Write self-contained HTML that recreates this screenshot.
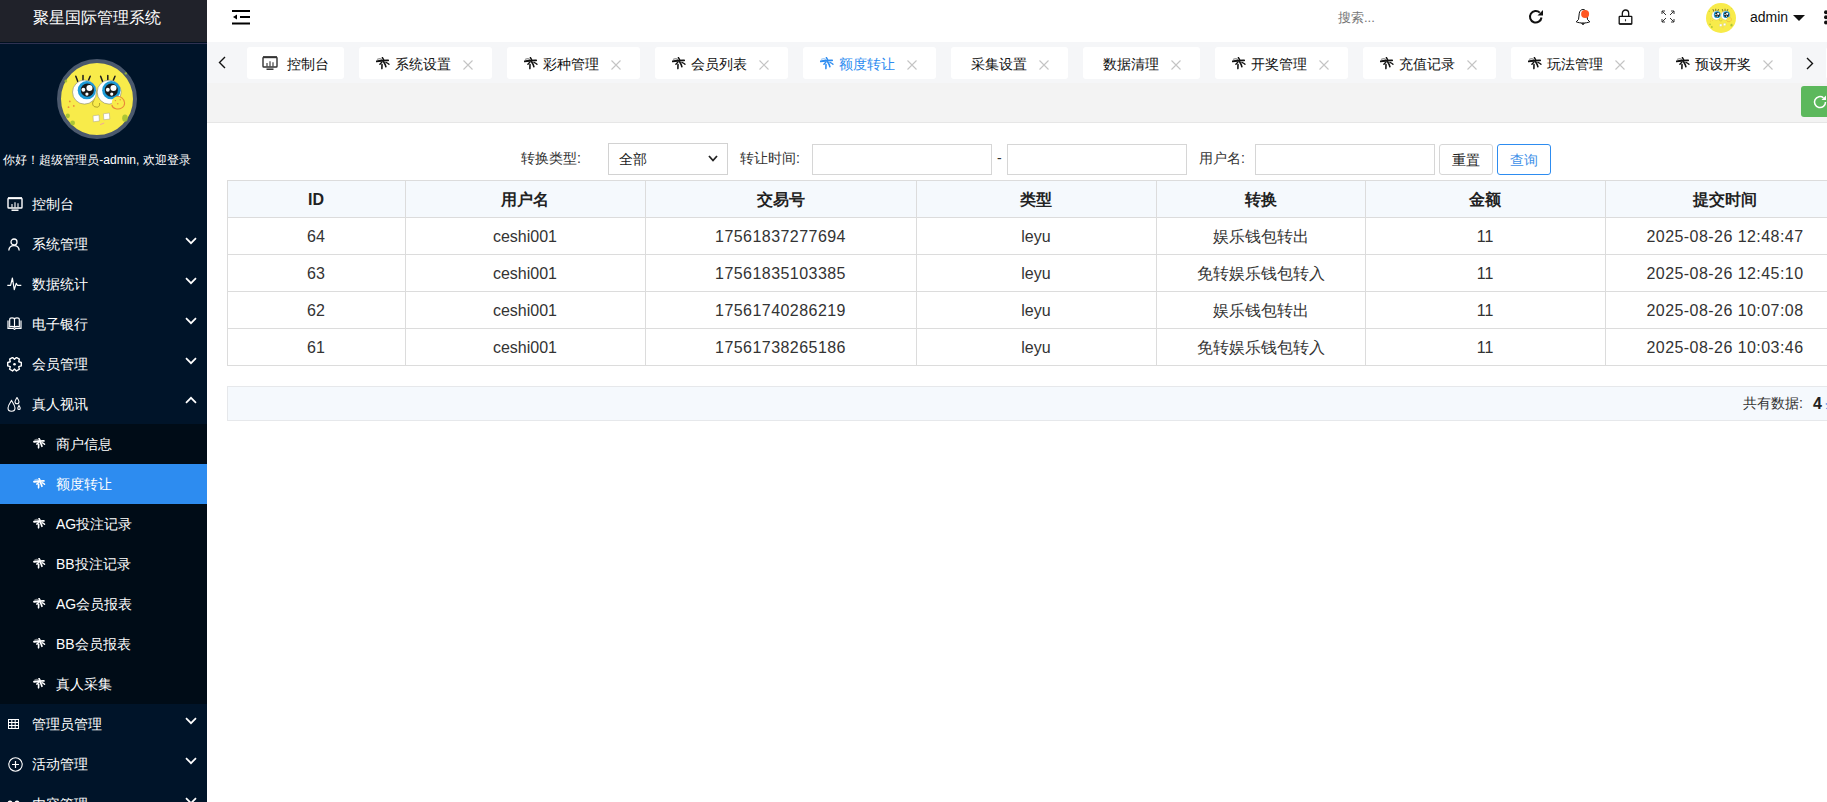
<!DOCTYPE html><html><head><meta charset="utf-8"><style>
*{margin:0;padding:0;box-sizing:border-box}
html,body{width:1827px;height:802px;overflow:hidden;background:#fff;font-family:"Liberation Sans",sans-serif;color:#333}
.a{position:absolute;white-space:nowrap}
svg{display:block}
</style></head><body>
<div class="a" style="left:0px;top:0px;width:207px;height:802px;background:#001429"></div>
<div class="a" style="left:0px;top:0px;width:207px;height:42px;background:#20222a"></div>
<div class="a" style="left:0px;top:42px;width:207px;height:1px;background:#00101f"></div>
<div class="a" style="left:0px;top:43px;width:207px;height:1px;background:#2e3252"></div>
<div class="a" style="left:0px;top:8px;width:194px;text-align:center;color:#fff;font-size:16px;line-height:20px">聚星国际管理系统</div>
<div class="a" style="left:57px;top:59px;"><svg width="80" height="80" viewBox="0 0 100 100"><circle cx="50" cy="50" r="47.5" fill="#f8eb4a" stroke="#4b596d" stroke-width="5"/>
<g fill="#9fbf32" opacity="0.85"><ellipse cx="13.5" cy="71" rx="2.6" ry="3"/><ellipse cx="19.5" cy="80" rx="3" ry="3"/><ellipse cx="85" cy="74" rx="3.5" ry="4.5"/><ellipse cx="11" cy="27.5" rx="1.8" ry="2"/><ellipse cx="86" cy="18" rx="1.5" ry="1.5"/></g>
<g fill="#ea8a3c"><circle cx="16" cy="53" r="1.1"/><circle cx="14.4" cy="60.2" r="1.1"/><circle cx="21" cy="58.6" r="1.1"/></g>
<g stroke="#1d1d1d" stroke-width="1.9" stroke-linecap="round"><path d="M26 28L23.5 21.5M32.5 27V20.5M39 27.5L41.5 21.5M57 28L54.5 21.5M63.5 27V20.5M70 27.5L72.5 21.5"/></g>
<circle cx="34.4" cy="41.4" r="15" fill="#fff" stroke="#8a8a6a" stroke-width="0.8"/>
<circle cx="65.2" cy="41.4" r="15" fill="#fff" stroke="#8a8a6a" stroke-width="0.8"/>
<circle cx="37.3" cy="39" r="11.4" fill="#1c9ad6"/><circle cx="67.9" cy="39" r="11.4" fill="#1c9ad6"/>
<circle cx="37.9" cy="38.9" r="8.2" fill="#1a1a1a"/><circle cx="67.9" cy="38.9" r="8.2" fill="#1a1a1a"/>
<circle cx="40.6" cy="36.2" r="3.8" fill="#fff"/><circle cx="33" cy="38.4" r="2.4" fill="#fff"/><circle cx="37.4" cy="43.9" r="2" fill="#fff"/>
<circle cx="70.6" cy="36.2" r="3.8" fill="#fff"/><circle cx="63.5" cy="38.4" r="2.4" fill="#fff"/><circle cx="68.4" cy="43.9" r="2" fill="#fff"/>
<path d="M47 51C43 54 44 60 49 60C52 61 54 58 53 55" fill="#f8eb4a" stroke="#9a8a20" stroke-width="1"/>
<circle cx="76.5" cy="54.5" r="8" fill="#f8eb4a"/><path d="M74 46.8C79 46 84.5 49.5 84.5 55C84.5 60.5 79 63.5 73.5 62.2C70.5 61.5 69 59.5 68.5 57.5" fill="none" stroke="#e8863a" stroke-width="1.3"/>
<path d="M45 71L52.5 70L53 77.5L45.5 78.5Z" fill="#fff" stroke="#b0a888" stroke-width="0.7"/><path d="M58 68.5L65.5 67.5L66 75L58.5 76Z" fill="#fff" stroke="#b0a888" stroke-width="0.7"/>
<path d="M54 82L59 80" stroke="#f0a0a0" stroke-width="1.2"/><g fill="#ea8a3c"><circle cx="73" cy="52" r="0.9"/><circle cx="79" cy="51" r="0.9"/><circle cx="76" cy="56" r="0.9"/></g>
</svg></div>
<div class="a" style="left:0px;top:152px;width:194px;text-align:center;color:#fff;font-size:12px;line-height:16px">你好！超级管理员-admin, 欢迎登录</div>
<div class="a" style="left:7px;top:197px;"><svg width="16" height="14" viewBox="0 0 16 14"><rect x="1" y="1.2" width="14" height="9.8" rx="0.8" fill="none" stroke="#fff" stroke-width="1.4"/><path d="M1 1.2H15" stroke="#fff" stroke-width="2"/><path d="M5 10.5V7M8 10.5V5.2M11 10.5V6.2" stroke="#fff" stroke-width="1.1"/><path d="M4.5 13.2H11.5" stroke="#fff" stroke-width="1.5"/></svg></div>
<div class="a" style="left:32px;top:195px;color:#fff;font-size:14px;line-height:18px">控制台</div>
<div class="a" style="left:7px;top:237px;"><svg width="14" height="14" viewBox="0 0 14 14"><circle cx="7" cy="5" r="3" fill="none" stroke="#fff" stroke-width="1.3"/><path d="M1.8 13.5C2 10.5 4.2 8.6 7 8.6S12 10.5 12.2 13.5" fill="none" stroke="#fff" stroke-width="1.3"/></svg></div>
<div class="a" style="left:32px;top:235px;color:#fff;font-size:14px;line-height:18px">系统管理</div>
<div class="a" style="left:185px;top:237px;"><svg width="12" height="8" viewBox="0 0 12 8"><path d="M1 1.2L6 6.2L11 1.2" fill="none" stroke="#fff" stroke-width="1.7"/></svg></div>
<div class="a" style="left:7px;top:277px;"><svg width="15" height="14" viewBox="0 0 15 14"><path d="M0.3 8.3H3.6L5.4 1L7.3 12.6L9.2 6.3L10.4 8.3H14.3" fill="none" stroke="#fff" stroke-width="1.2" stroke-linejoin="round"/></svg></div>
<div class="a" style="left:32px;top:275px;color:#fff;font-size:14px;line-height:18px">数据统计</div>
<div class="a" style="left:185px;top:277px;"><svg width="12" height="8" viewBox="0 0 12 8"><path d="M1 1.2L6 6.2L11 1.2" fill="none" stroke="#fff" stroke-width="1.7"/></svg></div>
<div class="a" style="left:7px;top:317px;"><svg width="15" height="13" viewBox="0 0 15 13"><path d="M1 3.5V11.3H6.2L7.5 12.4L8.8 11.3H14V3.5" fill="none" stroke="#fff" stroke-width="1.2"/><path d="M2.7 9.8V2.6C2.7 1.4 3.6 0.8 5 0.8S7.5 1.4 7.5 2.6C7.5 1.4 8.6 0.8 10 0.8S12.3 1.4 12.3 2.6V9.8C11 9.3 8.8 9.3 7.5 10.2C6.2 9.3 4 9.3 2.7 9.8Z M7.5 2.6V10.2" fill="none" stroke="#fff" stroke-width="1.15"/></svg></div>
<div class="a" style="left:32px;top:315px;color:#fff;font-size:14px;line-height:18px">电子银行</div>
<div class="a" style="left:185px;top:317px;"><svg width="12" height="8" viewBox="0 0 12 8"><path d="M1 1.2L6 6.2L11 1.2" fill="none" stroke="#fff" stroke-width="1.7"/></svg></div>
<div class="a" style="left:7px;top:357px;"><svg width="16" height="15" viewBox="0 0 16 15"><path d="M11.74 4.75 L14.29 5.51 L14.29 8.89 L11.74 9.65 L12.36 12.24 L9.43 13.93 L7.50 12.10 L5.57 13.93 L2.64 12.24 L3.26 9.65 L0.71 8.89 L0.71 5.51 L3.26 4.75 L2.64 2.16 L5.57 0.47 L7.50 2.30 L9.43 0.47 L12.36 2.16Z" fill="none" stroke="#fff" stroke-width="1.4" stroke-linejoin="round"/><circle cx="7.5" cy="7.2" r="1.3" fill="#fff"/></svg></div>
<div class="a" style="left:32px;top:355px;color:#fff;font-size:14px;line-height:18px">会员管理</div>
<div class="a" style="left:185px;top:357px;"><svg width="12" height="8" viewBox="0 0 12 8"><path d="M1 1.2L6 6.2L11 1.2" fill="none" stroke="#fff" stroke-width="1.7"/></svg></div>
<div class="a" style="left:7px;top:397px;"><svg width="15" height="15" viewBox="0 0 15 15"><path d="M4.5 3.5C3 6 1 8.5 1 11C1 13 2.6 14.3 4.5 14.3S8 13 8 11C8 8.5 6 6 4.5 3.5Z" fill="none" stroke="#fff" stroke-width="1.1"/><path d="M10 0.5C9 2.2 8 3.5 8 4.8C8 6 8.9 6.8 10 6.8S12 6 12 4.8C12 3.5 11 2.2 10 0.5Z" fill="none" stroke="#fff" stroke-width="1.1"/><path d="M12 8.5C11.4 9.6 10.8 10.4 10.8 11.2C10.8 12 11.3 12.5 12 12.5S13.2 12 13.2 11.2C13.2 10.4 12.6 9.6 12 8.5Z" fill="none" stroke="#fff" stroke-width="1.1"/></svg></div>
<div class="a" style="left:32px;top:395px;color:#fff;font-size:14px;line-height:18px">真人视讯</div>
<div class="a" style="left:185px;top:396px;"><svg width="12" height="8" viewBox="0 0 12 8"><path d="M1 6.8L6 1.8L11 6.8" fill="none" stroke="#fff" stroke-width="1.7"/></svg></div>
<div class="a" style="left:0px;top:424px;width:207px;height:280px;background:#000c17"></div>
<div class="a" style="left:0px;top:464px;width:207px;height:40px;background:#2d8cf0"></div>
<div class="a" style="left:33px;top:438px;"><svg width="13" height="11" viewBox="0 0 14 13"><g fill="none" stroke="#fff" stroke-linecap="round"><path d="M1.5 2.3C3 1.4 4.5 1.4 5.8 2.5" stroke-width="1.50" opacity="0.45"/><path d="M0.6 4.4C2.5 3.9 4.8 3.7 7.2 3.8" stroke-width="2.25"/><path d="M6.4 0.6L7.6 2.6" stroke-width="1.80"/><path d="M7.2 3.7C9 3.4 10.5 3.3 12.2 3.4" stroke-width="2.10"/><path d="M5.8 5.3L3.9 7.2" stroke-width="1.80"/><path d="M9.9 5.4C11.2 5.9 12.2 6.5 13 7.3" stroke-width="1.65"/><path d="M6 7.5L5.9 11.6" stroke-width="1.95"/><path d="M7.6 4.8C8.6 6.3 9.4 8 9.9 9.8" stroke-width="1.95"/></g></svg></div>
<div class="a" style="left:56px;top:435px;color:#fff;font-size:14px;line-height:18px">商户信息</div>
<div class="a" style="left:33px;top:478px;"><svg width="13" height="11" viewBox="0 0 14 13"><g fill="none" stroke="#fff" stroke-linecap="round"><path d="M1.5 2.3C3 1.4 4.5 1.4 5.8 2.5" stroke-width="1.50" opacity="0.45"/><path d="M0.6 4.4C2.5 3.9 4.8 3.7 7.2 3.8" stroke-width="2.25"/><path d="M6.4 0.6L7.6 2.6" stroke-width="1.80"/><path d="M7.2 3.7C9 3.4 10.5 3.3 12.2 3.4" stroke-width="2.10"/><path d="M5.8 5.3L3.9 7.2" stroke-width="1.80"/><path d="M9.9 5.4C11.2 5.9 12.2 6.5 13 7.3" stroke-width="1.65"/><path d="M6 7.5L5.9 11.6" stroke-width="1.95"/><path d="M7.6 4.8C8.6 6.3 9.4 8 9.9 9.8" stroke-width="1.95"/></g></svg></div>
<div class="a" style="left:56px;top:475px;color:#fff;font-size:14px;line-height:18px">额度转让</div>
<div class="a" style="left:33px;top:518px;"><svg width="13" height="11" viewBox="0 0 14 13"><g fill="none" stroke="#fff" stroke-linecap="round"><path d="M1.5 2.3C3 1.4 4.5 1.4 5.8 2.5" stroke-width="1.50" opacity="0.45"/><path d="M0.6 4.4C2.5 3.9 4.8 3.7 7.2 3.8" stroke-width="2.25"/><path d="M6.4 0.6L7.6 2.6" stroke-width="1.80"/><path d="M7.2 3.7C9 3.4 10.5 3.3 12.2 3.4" stroke-width="2.10"/><path d="M5.8 5.3L3.9 7.2" stroke-width="1.80"/><path d="M9.9 5.4C11.2 5.9 12.2 6.5 13 7.3" stroke-width="1.65"/><path d="M6 7.5L5.9 11.6" stroke-width="1.95"/><path d="M7.6 4.8C8.6 6.3 9.4 8 9.9 9.8" stroke-width="1.95"/></g></svg></div>
<div class="a" style="left:56px;top:515px;color:#fff;font-size:14px;line-height:18px">AG投注记录</div>
<div class="a" style="left:33px;top:558px;"><svg width="13" height="11" viewBox="0 0 14 13"><g fill="none" stroke="#fff" stroke-linecap="round"><path d="M1.5 2.3C3 1.4 4.5 1.4 5.8 2.5" stroke-width="1.50" opacity="0.45"/><path d="M0.6 4.4C2.5 3.9 4.8 3.7 7.2 3.8" stroke-width="2.25"/><path d="M6.4 0.6L7.6 2.6" stroke-width="1.80"/><path d="M7.2 3.7C9 3.4 10.5 3.3 12.2 3.4" stroke-width="2.10"/><path d="M5.8 5.3L3.9 7.2" stroke-width="1.80"/><path d="M9.9 5.4C11.2 5.9 12.2 6.5 13 7.3" stroke-width="1.65"/><path d="M6 7.5L5.9 11.6" stroke-width="1.95"/><path d="M7.6 4.8C8.6 6.3 9.4 8 9.9 9.8" stroke-width="1.95"/></g></svg></div>
<div class="a" style="left:56px;top:555px;color:#fff;font-size:14px;line-height:18px">BB投注记录</div>
<div class="a" style="left:33px;top:598px;"><svg width="13" height="11" viewBox="0 0 14 13"><g fill="none" stroke="#fff" stroke-linecap="round"><path d="M1.5 2.3C3 1.4 4.5 1.4 5.8 2.5" stroke-width="1.50" opacity="0.45"/><path d="M0.6 4.4C2.5 3.9 4.8 3.7 7.2 3.8" stroke-width="2.25"/><path d="M6.4 0.6L7.6 2.6" stroke-width="1.80"/><path d="M7.2 3.7C9 3.4 10.5 3.3 12.2 3.4" stroke-width="2.10"/><path d="M5.8 5.3L3.9 7.2" stroke-width="1.80"/><path d="M9.9 5.4C11.2 5.9 12.2 6.5 13 7.3" stroke-width="1.65"/><path d="M6 7.5L5.9 11.6" stroke-width="1.95"/><path d="M7.6 4.8C8.6 6.3 9.4 8 9.9 9.8" stroke-width="1.95"/></g></svg></div>
<div class="a" style="left:56px;top:595px;color:#fff;font-size:14px;line-height:18px">AG会员报表</div>
<div class="a" style="left:33px;top:638px;"><svg width="13" height="11" viewBox="0 0 14 13"><g fill="none" stroke="#fff" stroke-linecap="round"><path d="M1.5 2.3C3 1.4 4.5 1.4 5.8 2.5" stroke-width="1.50" opacity="0.45"/><path d="M0.6 4.4C2.5 3.9 4.8 3.7 7.2 3.8" stroke-width="2.25"/><path d="M6.4 0.6L7.6 2.6" stroke-width="1.80"/><path d="M7.2 3.7C9 3.4 10.5 3.3 12.2 3.4" stroke-width="2.10"/><path d="M5.8 5.3L3.9 7.2" stroke-width="1.80"/><path d="M9.9 5.4C11.2 5.9 12.2 6.5 13 7.3" stroke-width="1.65"/><path d="M6 7.5L5.9 11.6" stroke-width="1.95"/><path d="M7.6 4.8C8.6 6.3 9.4 8 9.9 9.8" stroke-width="1.95"/></g></svg></div>
<div class="a" style="left:56px;top:635px;color:#fff;font-size:14px;line-height:18px">BB会员报表</div>
<div class="a" style="left:33px;top:678px;"><svg width="13" height="11" viewBox="0 0 14 13"><g fill="none" stroke="#fff" stroke-linecap="round"><path d="M1.5 2.3C3 1.4 4.5 1.4 5.8 2.5" stroke-width="1.50" opacity="0.45"/><path d="M0.6 4.4C2.5 3.9 4.8 3.7 7.2 3.8" stroke-width="2.25"/><path d="M6.4 0.6L7.6 2.6" stroke-width="1.80"/><path d="M7.2 3.7C9 3.4 10.5 3.3 12.2 3.4" stroke-width="2.10"/><path d="M5.8 5.3L3.9 7.2" stroke-width="1.80"/><path d="M9.9 5.4C11.2 5.9 12.2 6.5 13 7.3" stroke-width="1.65"/><path d="M6 7.5L5.9 11.6" stroke-width="1.95"/><path d="M7.6 4.8C8.6 6.3 9.4 8 9.9 9.8" stroke-width="1.95"/></g></svg></div>
<div class="a" style="left:56px;top:675px;color:#fff;font-size:14px;line-height:18px">真人采集</div>
<div class="a" style="left:8px;top:719px;"><svg width="11" height="10" viewBox="0 0 11 10"><rect x="0.5" y="0.5" width="10" height="9" fill="none" stroke="#fff" stroke-width="1"/><path d="M0.5 3.5H10.5M0.5 6.5H10.5M3.8 0.5V9.5M7.2 0.5V9.5" stroke="#fff" stroke-width="1"/></svg></div>
<div class="a" style="left:32px;top:715px;color:#fff;font-size:14px;line-height:18px">管理员管理</div>
<div class="a" style="left:185px;top:717px;"><svg width="12" height="8" viewBox="0 0 12 8"><path d="M1 1.2L6 6.2L11 1.2" fill="none" stroke="#fff" stroke-width="1.7"/></svg></div>
<div class="a" style="left:8px;top:757px;"><svg width="15" height="15" viewBox="0 0 15 15"><circle cx="7.5" cy="7.5" r="6.7" fill="none" stroke="#fff" stroke-width="1.1"/><path d="M7.5 4V11M4 7.5H11" stroke="#fff" stroke-width="1.2"/></svg></div>
<div class="a" style="left:32px;top:755px;color:#fff;font-size:14px;line-height:18px">活动管理</div>
<div class="a" style="left:185px;top:757px;"><svg width="12" height="8" viewBox="0 0 12 8"><path d="M1 1.2L6 6.2L11 1.2" fill="none" stroke="#fff" stroke-width="1.7"/></svg></div>
<div class="a" style="left:7px;top:799px;"><svg width="14" height="8" viewBox="0 0 14 8"><circle cx="3" cy="4" r="2.5" fill="#fff"/><circle cx="10" cy="4" r="2.5" fill="#fff"/></svg></div>
<div class="a" style="left:32px;top:795px;color:#fff;font-size:14px;line-height:18px">内容管理</div>
<div class="a" style="left:185px;top:797px;"><svg width="12" height="8" viewBox="0 0 12 8"><path d="M1 1.2L6 6.2L11 1.2" fill="none" stroke="#fff" stroke-width="1.7"/></svg></div>
<div class="a" style="left:207px;top:0px;width:1620px;height:42px;background:#fff"></div>
<div class="a" style="left:232px;top:10px;"><svg width="18" height="15" viewBox="0 0 18 15"><path d="M0 1H18M8 7H18M0 13.5H18" stroke="#000" stroke-width="2"/><path d="M1 7L5 4.5V9.5Z" fill="#000"/></svg></div>
<div class="a" style="left:1338px;top:9px;color:#757575;font-size:13px;line-height:18px">搜索...</div>
<div class="a" style="left:1528px;top:9px;"><svg width="16" height="16" viewBox="0 0 16 16"><path d="M13.5 8.5A5.8 5.8 0 1 1 11.8 3.6" fill="none" stroke="#111" stroke-width="2"/><path d="M15 1V6.5H9.5Z" fill="#111"/></svg></div>
<div class="a" style="left:1575px;top:9px;"><svg width="16" height="17" viewBox="0 0 16 17"><path d="M1.2 12.8L3.5 10.5L4.3 4.2C4.6 1.8 6.2 0.5 8 0.5S11.4 1.8 11.7 4.2L12.5 10.5L14.8 12.8C12.5 13.8 10.3 14 8 14S3.5 13.8 1.2 12.8Z" fill="none" stroke="#111" stroke-width="1" stroke-linejoin="round"/><path d="M6.5 14.2L8 15.8L9.5 14.2" fill="#111" stroke="#111" stroke-width="0.9"/><circle cx="10.1" cy="5" r="4" fill="#ff5722"/></svg></div>
<div class="a" style="left:1618px;top:9px;"><svg width="16" height="16" viewBox="0 0 16 16"><path d="M4.3 7.5V4.5A3.2 3.5 0 0 1 10.7 4.5V7.5" fill="none" stroke="#111" stroke-width="1.3"/><rect x="1.2" y="7.4" width="12.6" height="7.6" rx="0.6" fill="none" stroke="#111" stroke-width="1.3"/><path d="M1.5 15H13.5" stroke="#111" stroke-width="1.2"/><path d="M7.5 10.2V12.3" stroke="#333" stroke-width="1.1"/></svg></div>
<div class="a" style="left:1661px;top:10px;"><svg width="14" height="13" viewBox="0 0 14 13"><path d="M1 1L5 5M1 1V4M1 1H4M13 1L9 5M13 1V4M13 1H10M1 12L5 8M1 12V9M1 12H4M13 12L9 8M13 12V9M13 12H10" fill="none" stroke="#333" stroke-width="1"/></svg></div>
<div class="a" style="left:1706px;top:3px;"><svg width="30" height="30" viewBox="0 0 100 100"><circle cx="50" cy="50" r="50" fill="#f8eb4a"/>
<g fill="#9fbf32" opacity="0.85"><ellipse cx="13.5" cy="71" rx="2.6" ry="3"/><ellipse cx="19.5" cy="80" rx="3" ry="3"/><ellipse cx="85" cy="74" rx="3.5" ry="4.5"/><ellipse cx="11" cy="27.5" rx="1.8" ry="2"/><ellipse cx="86" cy="18" rx="1.5" ry="1.5"/></g>
<g fill="#ea8a3c"><circle cx="16" cy="53" r="1.1"/><circle cx="14.4" cy="60.2" r="1.1"/><circle cx="21" cy="58.6" r="1.1"/></g>
<g stroke="#1d1d1d" stroke-width="1.9" stroke-linecap="round"><path d="M26 28L23.5 21.5M32.5 27V20.5M39 27.5L41.5 21.5M57 28L54.5 21.5M63.5 27V20.5M70 27.5L72.5 21.5"/></g>
<circle cx="34.4" cy="41.4" r="15" fill="#fff" stroke="#8a8a6a" stroke-width="0.8"/>
<circle cx="65.2" cy="41.4" r="15" fill="#fff" stroke="#8a8a6a" stroke-width="0.8"/>
<circle cx="37.3" cy="39" r="11.4" fill="#1c9ad6"/><circle cx="67.9" cy="39" r="11.4" fill="#1c9ad6"/>
<circle cx="37.9" cy="38.9" r="8.2" fill="#1a1a1a"/><circle cx="67.9" cy="38.9" r="8.2" fill="#1a1a1a"/>
<circle cx="40.6" cy="36.2" r="3.8" fill="#fff"/><circle cx="33" cy="38.4" r="2.4" fill="#fff"/><circle cx="37.4" cy="43.9" r="2" fill="#fff"/>
<circle cx="70.6" cy="36.2" r="3.8" fill="#fff"/><circle cx="63.5" cy="38.4" r="2.4" fill="#fff"/><circle cx="68.4" cy="43.9" r="2" fill="#fff"/>
<path d="M47 51C43 54 44 60 49 60C52 61 54 58 53 55" fill="#f8eb4a" stroke="#9a8a20" stroke-width="1"/>
<circle cx="76.5" cy="54.5" r="8" fill="#f8eb4a"/><path d="M74 46.8C79 46 84.5 49.5 84.5 55C84.5 60.5 79 63.5 73.5 62.2C70.5 61.5 69 59.5 68.5 57.5" fill="none" stroke="#e8863a" stroke-width="1.3"/>
<path d="M45 71L52.5 70L53 77.5L45.5 78.5Z" fill="#fff" stroke="#b0a888" stroke-width="0.7"/><path d="M58 68.5L65.5 67.5L66 75L58.5 76Z" fill="#fff" stroke="#b0a888" stroke-width="0.7"/>
<path d="M54 82L59 80" stroke="#f0a0a0" stroke-width="1.2"/><g fill="#ea8a3c"><circle cx="73" cy="52" r="0.9"/><circle cx="79" cy="51" r="0.9"/><circle cx="76" cy="56" r="0.9"/></g>
</svg></div>
<div class="a" style="left:1750px;top:8px;color:#111;font-size:14px;line-height:18px">admin</div>
<div class="a" style="left:1793px;top:15px;"><svg width="12" height="6" viewBox="0 0 12 6"><path d="M0 0H12L6 6Z" fill="#111"/></svg></div>
<div class="a" style="left:1823px;top:10px;"><svg width="6" height="16" viewBox="0 0 6 16"><circle cx="3" cy="2.3" r="2" fill="#111"/><circle cx="3" cy="7.3" r="2" fill="#111"/><circle cx="3" cy="12.6" r="2" fill="#111"/></svg></div>
<div class="a" style="left:207px;top:42px;width:1620px;height:41px;background:#f5f6f8"></div>
<div class="a" style="left:207px;top:83px;width:1620px;height:39px;background:#f3f3f3"></div>
<div class="a" style="left:207px;top:122px;width:1620px;height:1px;background:#e6e6e6"></div>
<div class="a" style="left:218px;top:56px;"><svg width="8" height="13" viewBox="0 0 8 13"><path d="M7 1L1.5 6.5L7 12" fill="none" stroke="#111" stroke-width="1.4"/></svg></div>
<div class="a" style="left:1806px;top:57px;"><svg width="8" height="13" viewBox="0 0 8 13"><path d="M1 1L6.5 6.5L1 12" fill="none" stroke="#111" stroke-width="1.4"/></svg></div>
<div class="a" style="left:247px;top:47px;width:97px;height:32px;background:#fff;border-radius:3px"></div>
<div class="a" style="left:262px;top:56px;"><svg width="16" height="14" viewBox="0 0 16 14"><rect x="1" y="1.2" width="14" height="9.8" rx="0.8" fill="none" stroke="#333" stroke-width="1.4"/><path d="M1 1.2H15" stroke="#333" stroke-width="2"/><path d="M5 10.5V7M8 10.5V5.2M11 10.5V6.2" stroke="#333" stroke-width="1.1"/><path d="M4.5 13.2H11.5" stroke="#333" stroke-width="1.5"/></svg></div>
<div class="a" style="left:287px;top:55px;color:#111;font-size:14px;line-height:18px">控制台</div>
<div class="a" style="left:359px;top:47px;width:133px;height:32px;background:#fff;border-radius:3px"></div>
<div class="a" style="left:376px;top:57px;"><svg width="14" height="13" viewBox="0 0 14 13"><g fill="none" stroke="#111" stroke-linecap="round"><path d="M1.5 2.3C3 1.4 4.5 1.4 5.8 2.5" stroke-width="1.20" opacity="0.45"/><path d="M0.6 4.4C2.5 3.9 4.8 3.7 7.2 3.8" stroke-width="1.80"/><path d="M6.4 0.6L7.6 2.6" stroke-width="1.44"/><path d="M7.2 3.7C9 3.4 10.5 3.3 12.2 3.4" stroke-width="1.68"/><path d="M5.8 5.3L3.9 7.2" stroke-width="1.44"/><path d="M9.9 5.4C11.2 5.9 12.2 6.5 13 7.3" stroke-width="1.32"/><path d="M6 7.5L5.9 11.6" stroke-width="1.56"/><path d="M7.6 4.8C8.6 6.3 9.4 8 9.9 9.8" stroke-width="1.56"/></g></svg></div>
<div class="a" style="left:395px;top:55px;color:#111;font-size:14px;line-height:18px">系统设置</div>
<div class="a" style="left:463px;top:60px;"><svg width="10" height="10" viewBox="0 0 10 10"><path d="M0.5 0.5L9.5 9.5M9.5 0.5L0.5 9.5" stroke="#c4c4c4" stroke-width="1.1"/></svg></div>
<div class="a" style="left:507px;top:47px;width:133px;height:32px;background:#fff;border-radius:3px"></div>
<div class="a" style="left:524px;top:57px;"><svg width="14" height="13" viewBox="0 0 14 13"><g fill="none" stroke="#111" stroke-linecap="round"><path d="M1.5 2.3C3 1.4 4.5 1.4 5.8 2.5" stroke-width="1.20" opacity="0.45"/><path d="M0.6 4.4C2.5 3.9 4.8 3.7 7.2 3.8" stroke-width="1.80"/><path d="M6.4 0.6L7.6 2.6" stroke-width="1.44"/><path d="M7.2 3.7C9 3.4 10.5 3.3 12.2 3.4" stroke-width="1.68"/><path d="M5.8 5.3L3.9 7.2" stroke-width="1.44"/><path d="M9.9 5.4C11.2 5.9 12.2 6.5 13 7.3" stroke-width="1.32"/><path d="M6 7.5L5.9 11.6" stroke-width="1.56"/><path d="M7.6 4.8C8.6 6.3 9.4 8 9.9 9.8" stroke-width="1.56"/></g></svg></div>
<div class="a" style="left:543px;top:55px;color:#111;font-size:14px;line-height:18px">彩种管理</div>
<div class="a" style="left:611px;top:60px;"><svg width="10" height="10" viewBox="0 0 10 10"><path d="M0.5 0.5L9.5 9.5M9.5 0.5L0.5 9.5" stroke="#c4c4c4" stroke-width="1.1"/></svg></div>
<div class="a" style="left:655px;top:47px;width:133px;height:32px;background:#fff;border-radius:3px"></div>
<div class="a" style="left:672px;top:57px;"><svg width="14" height="13" viewBox="0 0 14 13"><g fill="none" stroke="#111" stroke-linecap="round"><path d="M1.5 2.3C3 1.4 4.5 1.4 5.8 2.5" stroke-width="1.20" opacity="0.45"/><path d="M0.6 4.4C2.5 3.9 4.8 3.7 7.2 3.8" stroke-width="1.80"/><path d="M6.4 0.6L7.6 2.6" stroke-width="1.44"/><path d="M7.2 3.7C9 3.4 10.5 3.3 12.2 3.4" stroke-width="1.68"/><path d="M5.8 5.3L3.9 7.2" stroke-width="1.44"/><path d="M9.9 5.4C11.2 5.9 12.2 6.5 13 7.3" stroke-width="1.32"/><path d="M6 7.5L5.9 11.6" stroke-width="1.56"/><path d="M7.6 4.8C8.6 6.3 9.4 8 9.9 9.8" stroke-width="1.56"/></g></svg></div>
<div class="a" style="left:691px;top:55px;color:#111;font-size:14px;line-height:18px">会员列表</div>
<div class="a" style="left:759px;top:60px;"><svg width="10" height="10" viewBox="0 0 10 10"><path d="M0.5 0.5L9.5 9.5M9.5 0.5L0.5 9.5" stroke="#c4c4c4" stroke-width="1.1"/></svg></div>
<div class="a" style="left:803px;top:47px;width:133px;height:32px;background:#fff;border-radius:3px"></div>
<div class="a" style="left:820px;top:57px;"><svg width="14" height="13" viewBox="0 0 14 13"><g fill="none" stroke="#2d8cf0" stroke-linecap="round"><path d="M1.5 2.3C3 1.4 4.5 1.4 5.8 2.5" stroke-width="1.20" opacity="0.45"/><path d="M0.6 4.4C2.5 3.9 4.8 3.7 7.2 3.8" stroke-width="1.80"/><path d="M6.4 0.6L7.6 2.6" stroke-width="1.44"/><path d="M7.2 3.7C9 3.4 10.5 3.3 12.2 3.4" stroke-width="1.68"/><path d="M5.8 5.3L3.9 7.2" stroke-width="1.44"/><path d="M9.9 5.4C11.2 5.9 12.2 6.5 13 7.3" stroke-width="1.32"/><path d="M6 7.5L5.9 11.6" stroke-width="1.56"/><path d="M7.6 4.8C8.6 6.3 9.4 8 9.9 9.8" stroke-width="1.56"/></g></svg></div>
<div class="a" style="left:839px;top:55px;color:#2d8cf0;font-size:14px;line-height:18px">额度转让</div>
<div class="a" style="left:907px;top:60px;"><svg width="10" height="10" viewBox="0 0 10 10"><path d="M0.5 0.5L9.5 9.5M9.5 0.5L0.5 9.5" stroke="#c4c4c4" stroke-width="1.1"/></svg></div>
<div class="a" style="left:951px;top:47px;width:117px;height:32px;background:#fff;border-radius:3px"></div>
<div class="a" style="left:971px;top:55px;color:#111;font-size:14px;line-height:18px">采集设置</div>
<div class="a" style="left:1039px;top:60px;"><svg width="10" height="10" viewBox="0 0 10 10"><path d="M0.5 0.5L9.5 9.5M9.5 0.5L0.5 9.5" stroke="#c4c4c4" stroke-width="1.1"/></svg></div>
<div class="a" style="left:1083px;top:47px;width:117px;height:32px;background:#fff;border-radius:3px"></div>
<div class="a" style="left:1103px;top:55px;color:#111;font-size:14px;line-height:18px">数据清理</div>
<div class="a" style="left:1171px;top:60px;"><svg width="10" height="10" viewBox="0 0 10 10"><path d="M0.5 0.5L9.5 9.5M9.5 0.5L0.5 9.5" stroke="#c4c4c4" stroke-width="1.1"/></svg></div>
<div class="a" style="left:1215px;top:47px;width:133px;height:32px;background:#fff;border-radius:3px"></div>
<div class="a" style="left:1232px;top:57px;"><svg width="14" height="13" viewBox="0 0 14 13"><g fill="none" stroke="#111" stroke-linecap="round"><path d="M1.5 2.3C3 1.4 4.5 1.4 5.8 2.5" stroke-width="1.20" opacity="0.45"/><path d="M0.6 4.4C2.5 3.9 4.8 3.7 7.2 3.8" stroke-width="1.80"/><path d="M6.4 0.6L7.6 2.6" stroke-width="1.44"/><path d="M7.2 3.7C9 3.4 10.5 3.3 12.2 3.4" stroke-width="1.68"/><path d="M5.8 5.3L3.9 7.2" stroke-width="1.44"/><path d="M9.9 5.4C11.2 5.9 12.2 6.5 13 7.3" stroke-width="1.32"/><path d="M6 7.5L5.9 11.6" stroke-width="1.56"/><path d="M7.6 4.8C8.6 6.3 9.4 8 9.9 9.8" stroke-width="1.56"/></g></svg></div>
<div class="a" style="left:1251px;top:55px;color:#111;font-size:14px;line-height:18px">开奖管理</div>
<div class="a" style="left:1319px;top:60px;"><svg width="10" height="10" viewBox="0 0 10 10"><path d="M0.5 0.5L9.5 9.5M9.5 0.5L0.5 9.5" stroke="#c4c4c4" stroke-width="1.1"/></svg></div>
<div class="a" style="left:1363px;top:47px;width:133px;height:32px;background:#fff;border-radius:3px"></div>
<div class="a" style="left:1380px;top:57px;"><svg width="14" height="13" viewBox="0 0 14 13"><g fill="none" stroke="#111" stroke-linecap="round"><path d="M1.5 2.3C3 1.4 4.5 1.4 5.8 2.5" stroke-width="1.20" opacity="0.45"/><path d="M0.6 4.4C2.5 3.9 4.8 3.7 7.2 3.8" stroke-width="1.80"/><path d="M6.4 0.6L7.6 2.6" stroke-width="1.44"/><path d="M7.2 3.7C9 3.4 10.5 3.3 12.2 3.4" stroke-width="1.68"/><path d="M5.8 5.3L3.9 7.2" stroke-width="1.44"/><path d="M9.9 5.4C11.2 5.9 12.2 6.5 13 7.3" stroke-width="1.32"/><path d="M6 7.5L5.9 11.6" stroke-width="1.56"/><path d="M7.6 4.8C8.6 6.3 9.4 8 9.9 9.8" stroke-width="1.56"/></g></svg></div>
<div class="a" style="left:1399px;top:55px;color:#111;font-size:14px;line-height:18px">充值记录</div>
<div class="a" style="left:1467px;top:60px;"><svg width="10" height="10" viewBox="0 0 10 10"><path d="M0.5 0.5L9.5 9.5M9.5 0.5L0.5 9.5" stroke="#c4c4c4" stroke-width="1.1"/></svg></div>
<div class="a" style="left:1511px;top:47px;width:133px;height:32px;background:#fff;border-radius:3px"></div>
<div class="a" style="left:1528px;top:57px;"><svg width="14" height="13" viewBox="0 0 14 13"><g fill="none" stroke="#111" stroke-linecap="round"><path d="M1.5 2.3C3 1.4 4.5 1.4 5.8 2.5" stroke-width="1.20" opacity="0.45"/><path d="M0.6 4.4C2.5 3.9 4.8 3.7 7.2 3.8" stroke-width="1.80"/><path d="M6.4 0.6L7.6 2.6" stroke-width="1.44"/><path d="M7.2 3.7C9 3.4 10.5 3.3 12.2 3.4" stroke-width="1.68"/><path d="M5.8 5.3L3.9 7.2" stroke-width="1.44"/><path d="M9.9 5.4C11.2 5.9 12.2 6.5 13 7.3" stroke-width="1.32"/><path d="M6 7.5L5.9 11.6" stroke-width="1.56"/><path d="M7.6 4.8C8.6 6.3 9.4 8 9.9 9.8" stroke-width="1.56"/></g></svg></div>
<div class="a" style="left:1547px;top:55px;color:#111;font-size:14px;line-height:18px">玩法管理</div>
<div class="a" style="left:1615px;top:60px;"><svg width="10" height="10" viewBox="0 0 10 10"><path d="M0.5 0.5L9.5 9.5M9.5 0.5L0.5 9.5" stroke="#c4c4c4" stroke-width="1.1"/></svg></div>
<div class="a" style="left:1659px;top:47px;width:133px;height:32px;background:#fff;border-radius:3px"></div>
<div class="a" style="left:1676px;top:57px;"><svg width="14" height="13" viewBox="0 0 14 13"><g fill="none" stroke="#111" stroke-linecap="round"><path d="M1.5 2.3C3 1.4 4.5 1.4 5.8 2.5" stroke-width="1.20" opacity="0.45"/><path d="M0.6 4.4C2.5 3.9 4.8 3.7 7.2 3.8" stroke-width="1.80"/><path d="M6.4 0.6L7.6 2.6" stroke-width="1.44"/><path d="M7.2 3.7C9 3.4 10.5 3.3 12.2 3.4" stroke-width="1.68"/><path d="M5.8 5.3L3.9 7.2" stroke-width="1.44"/><path d="M9.9 5.4C11.2 5.9 12.2 6.5 13 7.3" stroke-width="1.32"/><path d="M6 7.5L5.9 11.6" stroke-width="1.56"/><path d="M7.6 4.8C8.6 6.3 9.4 8 9.9 9.8" stroke-width="1.56"/></g></svg></div>
<div class="a" style="left:1695px;top:55px;color:#111;font-size:14px;line-height:18px">预设开奖</div>
<div class="a" style="left:1763px;top:60px;"><svg width="10" height="10" viewBox="0 0 10 10"><path d="M0.5 0.5L9.5 9.5M9.5 0.5L0.5 9.5" stroke="#c4c4c4" stroke-width="1.1"/></svg></div>
<div class="a" style="left:1826px;top:47px;width:74px;height:32px;background:#fff;border-radius:3px"></div>
<div class="a" style="left:1801px;top:86px;width:40px;height:31px;background:#5cb85c;border-radius:3px"></div>
<div class="a" style="left:1812px;top:94px;"><svg width="16" height="16" viewBox="0 0 16 16"><path d="M13.5 8A5.5 5.5 0 1 1 11.5 3.8" fill="none" stroke="#fff" stroke-width="1.5"/><path d="M14 1.5V6H9.5Z" fill="#fff"/></svg></div>
<div class="a" style="left:521px;top:149px;color:#333;font-size:14px;line-height:18px">转换类型:</div>
<div class="a" style="left:608px;top:143px;width:120px;height:32px;border:1px solid #d2d2d2;background:#fff"></div>
<div class="a" style="left:619px;top:150px;color:#222;font-size:14px;line-height:18px">全部</div>
<div class="a" style="left:708px;top:155px;"><svg width="10" height="7" viewBox="0 0 10 7"><path d="M1 1L5 5.5L9 1" fill="none" stroke="#222" stroke-width="1.8"/></svg></div>
<div class="a" style="left:740px;top:149px;color:#333;font-size:14px;line-height:18px">转让时间:</div>
<div class="a" style="left:812px;top:144px;width:180px;height:31px;border:1px solid #d6d6d6;background:#fff"></div>
<div class="a" style="left:997px;top:149px;color:#333;font-size:14px;line-height:18px">-</div>
<div class="a" style="left:1007px;top:144px;width:180px;height:31px;border:1px solid #d6d6d6;background:#fff"></div>
<div class="a" style="left:1199px;top:149px;color:#333;font-size:14px;line-height:18px">用户名:</div>
<div class="a" style="left:1255px;top:144px;width:180px;height:31px;border:1px solid #d6d6d6;background:#fff"></div>
<div class="a" style="left:1439px;top:144px;width:54px;height:31px;border:1px solid #d6d6d6;border-radius:3px;background:#fff"></div>
<div class="a" style="left:1452px;top:151px;color:#222;font-size:14px;line-height:18px">重置</div>
<div class="a" style="left:1497px;top:144px;width:54px;height:31px;border:1px solid #2d8cf0;border-radius:3px;background:#fff"></div>
<div class="a" style="left:1510px;top:151px;color:#3d8fe8;font-size:14px;line-height:18px">查询</div>
<div class="a" style="left:228px;top:181px;width:1620px;height:36px;background:#f5f9fd"></div>
<div class="a" style="left:227px;top:180px;width:1px;height:186px;background:#dcdcdc"></div>
<div class="a" style="left:405px;top:180px;width:1px;height:186px;background:#dcdcdc"></div>
<div class="a" style="left:645px;top:180px;width:1px;height:186px;background:#dcdcdc"></div>
<div class="a" style="left:916px;top:180px;width:1px;height:186px;background:#dcdcdc"></div>
<div class="a" style="left:1156px;top:180px;width:1px;height:186px;background:#dcdcdc"></div>
<div class="a" style="left:1365px;top:180px;width:1px;height:186px;background:#dcdcdc"></div>
<div class="a" style="left:1605px;top:180px;width:1px;height:186px;background:#dcdcdc"></div>
<div class="a" style="left:1845px;top:180px;width:1px;height:186px;background:#dcdcdc"></div>
<div class="a" style="left:227px;top:180px;width:1620px;height:1px;background:#dcdcdc"></div>
<div class="a" style="left:227px;top:217px;width:1620px;height:1px;background:#dcdcdc"></div>
<div class="a" style="left:227px;top:254px;width:1620px;height:1px;background:#dcdcdc"></div>
<div class="a" style="left:227px;top:291px;width:1620px;height:1px;background:#dcdcdc"></div>
<div class="a" style="left:227px;top:328px;width:1620px;height:1px;background:#dcdcdc"></div>
<div class="a" style="left:227px;top:365px;width:1620px;height:1px;background:#dcdcdc"></div>
<div class="a" style="left:227px;top:190px;width:178px;text-align:center;color:#222;font-size:16px;font-weight:bold;line-height:20px">ID</div>
<div class="a" style="left:405px;top:190px;width:240px;text-align:center;color:#222;font-size:16px;font-weight:bold;line-height:20px">用户名</div>
<div class="a" style="left:645px;top:190px;width:271px;text-align:center;color:#222;font-size:16px;font-weight:bold;line-height:20px">交易号</div>
<div class="a" style="left:916px;top:190px;width:240px;text-align:center;color:#222;font-size:16px;font-weight:bold;line-height:20px">类型</div>
<div class="a" style="left:1156px;top:190px;width:209px;text-align:center;color:#222;font-size:16px;font-weight:bold;line-height:20px">转换</div>
<div class="a" style="left:1365px;top:190px;width:240px;text-align:center;color:#222;font-size:16px;font-weight:bold;line-height:20px">金额</div>
<div class="a" style="left:1605px;top:190px;width:240px;text-align:center;color:#222;font-size:16px;font-weight:bold;line-height:20px">提交时间</div>
<div class="a" style="left:227px;top:227px;width:178px;text-align:center;color:#333;font-size:16px;line-height:20px;letter-spacing:0">64</div>
<div class="a" style="left:405px;top:227px;width:240px;text-align:center;color:#333;font-size:16px;line-height:20px;letter-spacing:0">ceshi001</div>
<div class="a" style="left:645px;top:227px;width:271px;text-align:center;color:#333;font-size:16px;line-height:20px;letter-spacing:0.45px">17561837277694</div>
<div class="a" style="left:916px;top:227px;width:240px;text-align:center;color:#333;font-size:16px;line-height:20px;letter-spacing:0">leyu</div>
<div class="a" style="left:1156px;top:227px;width:209px;text-align:center;color:#333;font-size:16px;line-height:20px;letter-spacing:0">娱乐钱包转出</div>
<div class="a" style="left:1365px;top:227px;width:240px;text-align:center;color:#333;font-size:16px;line-height:20px;letter-spacing:0">11</div>
<div class="a" style="left:1605px;top:227px;width:240px;text-align:center;color:#333;font-size:16px;line-height:20px;letter-spacing:0.45px">2025-08-26 12:48:47</div>
<div class="a" style="left:227px;top:264px;width:178px;text-align:center;color:#333;font-size:16px;line-height:20px;letter-spacing:0">63</div>
<div class="a" style="left:405px;top:264px;width:240px;text-align:center;color:#333;font-size:16px;line-height:20px;letter-spacing:0">ceshi001</div>
<div class="a" style="left:645px;top:264px;width:271px;text-align:center;color:#333;font-size:16px;line-height:20px;letter-spacing:0.45px">17561835103385</div>
<div class="a" style="left:916px;top:264px;width:240px;text-align:center;color:#333;font-size:16px;line-height:20px;letter-spacing:0">leyu</div>
<div class="a" style="left:1156px;top:264px;width:209px;text-align:center;color:#333;font-size:16px;line-height:20px;letter-spacing:0">免转娱乐钱包转入</div>
<div class="a" style="left:1365px;top:264px;width:240px;text-align:center;color:#333;font-size:16px;line-height:20px;letter-spacing:0">11</div>
<div class="a" style="left:1605px;top:264px;width:240px;text-align:center;color:#333;font-size:16px;line-height:20px;letter-spacing:0.45px">2025-08-26 12:45:10</div>
<div class="a" style="left:227px;top:301px;width:178px;text-align:center;color:#333;font-size:16px;line-height:20px;letter-spacing:0">62</div>
<div class="a" style="left:405px;top:301px;width:240px;text-align:center;color:#333;font-size:16px;line-height:20px;letter-spacing:0">ceshi001</div>
<div class="a" style="left:645px;top:301px;width:271px;text-align:center;color:#333;font-size:16px;line-height:20px;letter-spacing:0.45px">17561740286219</div>
<div class="a" style="left:916px;top:301px;width:240px;text-align:center;color:#333;font-size:16px;line-height:20px;letter-spacing:0">leyu</div>
<div class="a" style="left:1156px;top:301px;width:209px;text-align:center;color:#333;font-size:16px;line-height:20px;letter-spacing:0">娱乐钱包转出</div>
<div class="a" style="left:1365px;top:301px;width:240px;text-align:center;color:#333;font-size:16px;line-height:20px;letter-spacing:0">11</div>
<div class="a" style="left:1605px;top:301px;width:240px;text-align:center;color:#333;font-size:16px;line-height:20px;letter-spacing:0.45px">2025-08-26 10:07:08</div>
<div class="a" style="left:227px;top:338px;width:178px;text-align:center;color:#333;font-size:16px;line-height:20px;letter-spacing:0">61</div>
<div class="a" style="left:405px;top:338px;width:240px;text-align:center;color:#333;font-size:16px;line-height:20px;letter-spacing:0">ceshi001</div>
<div class="a" style="left:645px;top:338px;width:271px;text-align:center;color:#333;font-size:16px;line-height:20px;letter-spacing:0.45px">17561738265186</div>
<div class="a" style="left:916px;top:338px;width:240px;text-align:center;color:#333;font-size:16px;line-height:20px;letter-spacing:0">leyu</div>
<div class="a" style="left:1156px;top:338px;width:209px;text-align:center;color:#333;font-size:16px;line-height:20px;letter-spacing:0">免转娱乐钱包转入</div>
<div class="a" style="left:1365px;top:338px;width:240px;text-align:center;color:#333;font-size:16px;line-height:20px;letter-spacing:0">11</div>
<div class="a" style="left:1605px;top:338px;width:240px;text-align:center;color:#333;font-size:16px;line-height:20px;letter-spacing:0.45px">2025-08-26 10:03:46</div>
<div class="a" style="left:227px;top:386px;width:1620px;height:35px;background:#f5f9fd;border:1px solid #e6e8eb"></div>
<div class="a" style="left:1743px;top:394px;color:#333;font-size:14px;line-height:18px">共有数据:</div>
<div class="a" style="left:1813px;top:395px;color:#222;font-size:16px;font-weight:bold;line-height:18px">4</div>
<div class="a" style="left:1825px;top:394px;color:#2d8cf0;font-size:14px;line-height:18px">条</div>
</body></html>
